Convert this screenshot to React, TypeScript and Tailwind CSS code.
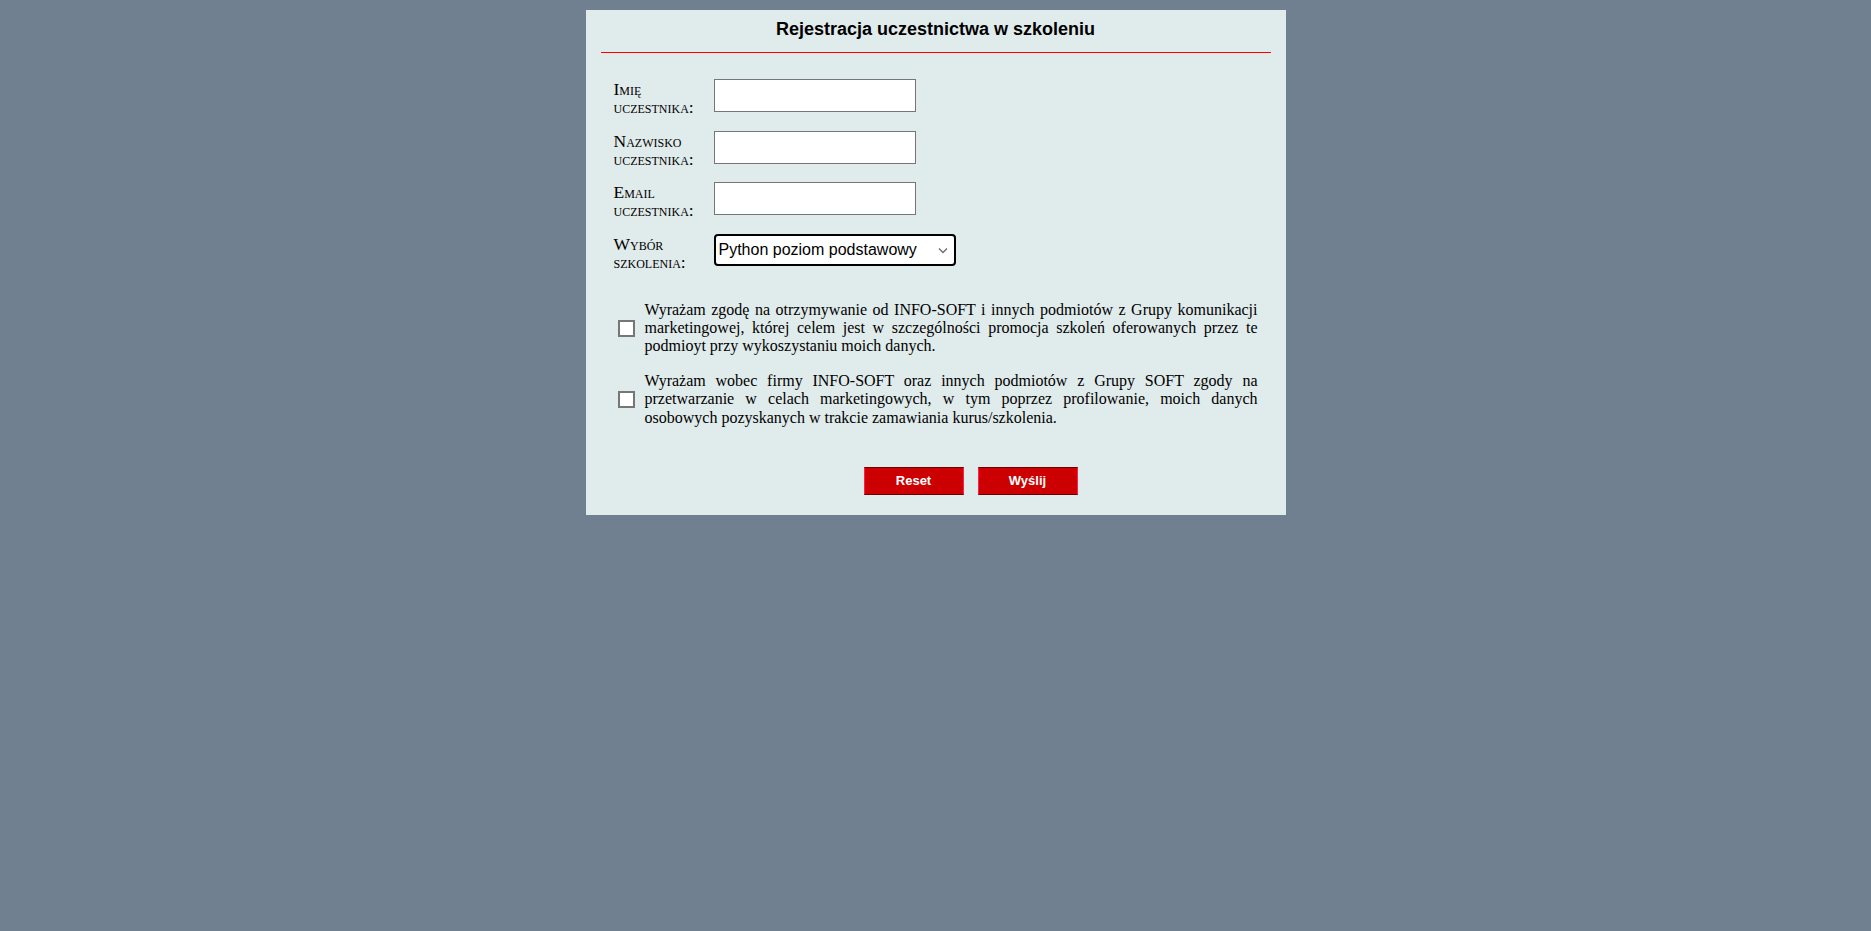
import React, { useState } from 'react';

const labelCls =
  "w-[90px] mt-[1px] text-[17.5px] leading-[18px] text-black [font-variant:small-caps] [font-family:'Liberation_Serif','Times_New_Roman',serif]";

const fields = [
  { id: 'imie', label: 'Imię uczestnika:' },
  { id: 'nazwisko', label: 'Nazwisko uczestnika:' },
  { id: 'email', label: 'Email uczestnika:' },
];

const zgody = [
  'Wyrażam zgodę na otrzymywanie od INFO-SOFT i innych podmiotów z Grupy komunikacji marketingowej, której celem jest w szczególności promocja szkoleń oferowanych przez te podmioyt przy wykoszystaniu moich danych.',
  'Wyrażam wobec firmy INFO-SOFT oraz innych podmiotów z Grupy SOFT zgody na przetwarzanie w celach marketingowych, w tym poprzez profilowanie, moich danych osobowych pozyskanych w trakcie zamawiania kurus/szkolenia.',
];

const App: React.FC = () => {
  const [checked, setChecked] = useState<boolean[]>([false, false]);

  return (
    <div className="min-h-screen w-full bg-[#708090] pt-[10px]">
      <div className="mx-auto w-[700px] bg-[#e0ebeb] pt-[9px] pb-[20px]">
        {/* Nagłówek */}
        <h2 className="text-center text-[18px] leading-[21px] font-bold text-black [font-family:'Liberation_Sans',Arial,sans-serif]">
          Rejestracja uczestnictwa w szkoleniu
        </h2>
        <div className="mx-[15px] mt-[12px] h-px bg-[#ff0000]" />

        {/* Formularz */}
        <div className="mt-[26px] px-[28px] flex flex-col gap-[18.5px]">
          {fields.map((f) => (
            <div key={f.id} className="flex items-start gap-[10px] h-[33px]">
              <label htmlFor={f.id} className={labelCls}>
                {f.label}
              </label>
              <input
                id={f.id}
                type="text"
                className="w-[202px] h-[33px] bg-white border border-[#767676] outline-none px-1 text-[16px]"
              />
            </div>
          ))}
          <div className="flex items-start gap-[10px] h-[32px]">
            <label htmlFor="szkolenie" className={labelCls}>
              Wybór szkolenia:
            </label>
            <div className="relative w-[242px] h-[32px] bg-white border-2 border-black rounded-[4px] flex items-center">
              <span className="pl-[3px] text-[16px] text-black [font-family:'Liberation_Sans',Arial,sans-serif]">
                Python poziom podstawowy
              </span>
              <svg
                className="absolute right-[6px] top-[11px]"
                width="10"
                height="7"
                viewBox="0 0 10 7"
                fill="none"
              >
                <path d="M1 1.5 L5 5.5 L9 1.5" stroke="#6b6b6b" strokeWidth="1.3" />
              </svg>
            </div>
          </div>
        </div>

        {/* Zgody */}
        <div className="mt-[35px] px-[28px] flex flex-col gap-[16px]">
          {zgody.map((t, i) => (
            <div key={i} className="flex items-center">
              <button
                type="button"
                onClick={() => setChecked(checked.map((c, j) => (j === i ? !c : c)))}
                className="ml-[4px] w-[17px] h-[17px] shrink-0 bg-white border-2 border-[#767676] flex items-center justify-center"
              >
                {checked[i] && <span className="w-[9px] h-[9px] bg-black" />}
              </button>
              <p className="ml-[10px] flex-1 text-justify text-[16px] leading-[18.4px] text-black [font-family:'Liberation_Serif','Times_New_Roman',serif]">
                {t}
              </p>
            </div>
          ))}
        </div>

        {/* Przyciski */}
        <div className="mt-[40px] pl-[70px] flex justify-center gap-[14px]">
          <button
            type="reset"
            className="w-[100px] h-[28px] bg-[#cc0000] border-y border-y-[#6e0000] border-x border-x-[#ff1f4f] text-white text-[13px] font-bold [font-family:'Liberation_Sans',Arial,sans-serif]"
          >
            Reset
          </button>
          <button
            type="submit"
            className="w-[100px] h-[28px] bg-[#cc0000] border-y border-y-[#6e0000] border-x border-x-[#ff1f4f] text-white text-[13px] font-bold [font-family:'Liberation_Sans',Arial,sans-serif]"
          >
            Wyślij
          </button>
        </div>
      </div>
    </div>
  );
};

export default App;
